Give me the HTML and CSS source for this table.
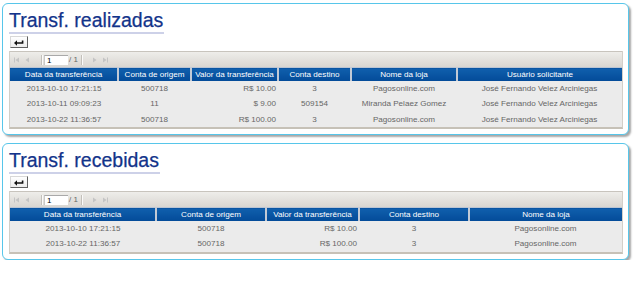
FILE: index.html
```html
<!DOCTYPE html>
<html lang="pt">
<head>
<meta charset="utf-8">
<title>Transferências</title>
<link rel="stylesheet" href="styles.css">
</head>
<body>
<div class="page">
  <section class="panel">
    <h1 class="title">Transf. realizadas</h1>
    <button class="back" type="button"><svg width="10" height="7" viewBox="0 0 10 7"><path d="M0 4 L3 1.3 L3 3.2 L7.8 3.2 L7.8 1.5 L9.4 1.5 L9.4 4.8 L3 4.8 L3 6.7 Z" fill="#111"/></svg></button>
    <div class="grid">
      <div class="pager">
        <svg class="pg" width="6" height="6" viewBox="0 0 6 6"><rect x="0" y="0.5" width="1" height="5" fill="#c4c4c4"/><path d="M5 0.5 L1.5 3 L5 5.5Z" fill="#c4c4c4"/></svg>
        <svg class="pg" width="5" height="6" viewBox="0 0 5 6"><path d="M4 0.5 L0.5 3 L4 5.5Z" fill="#c4c4c4"/></svg>
        <span class="sep"></span>
        <span class="pinput">1</span>
        <span class="ptotal">/ 1</span>
        <span class="sep"></span>
        <svg class="pg" width="5" height="6" viewBox="0 0 5 6"><path d="M1 0.5 L4.5 3 L1 5.5Z" fill="#c4c4c4"/></svg>
        <svg class="pg" width="6" height="6" viewBox="0 0 6 6"><path d="M1 0.5 L4.5 3 L1 5.5Z" fill="#c4c4c4"/><rect x="5" y="0.5" width="1" height="5" fill="#c4c4c4"/></svg>
      </div>
      <table class="tbl">
        <colgroup>
          <col class="a1"><col class="a2"><col class="a3"><col class="a4"><col class="a5"><col class="a6">
        </colgroup>
        <thead>
          <tr><th>Data da transferência</th><th>Conta de origem</th><th>Valor da transferência</th><th>Conta destino</th><th>Nome da loja</th><th>Usuário solicitante</th></tr>
        </thead>
        <tbody>
          <tr><td>2013-10-10 17:21:15</td><td>500718</td><td class="num">R$ 10.00</td><td>3</td><td>Pagosonline.com</td><td>José Fernando Velez Arciniegas</td></tr>
          <tr><td>2013-10-11 09:09:23</td><td>11</td><td class="num">$ 9.00</td><td>509154</td><td>Miranda Pelaez Gomez</td><td>José Fernando Velez Arciniegas</td></tr>
          <tr><td>2013-10-22 11:36:57</td><td>500718</td><td class="num">R$ 100.00</td><td>3</td><td>Pagosonline.com</td><td>José Fernando Velez Arciniegas</td></tr>
        </tbody>
      </table>
    </div>
  </section>

  <section class="panel">
    <h1 class="title">Transf. recebidas</h1>
    <button class="back" type="button"><svg width="10" height="7" viewBox="0 0 10 7"><path d="M0 4 L3 1.3 L3 3.2 L7.8 3.2 L7.8 1.5 L9.4 1.5 L9.4 4.8 L3 4.8 L3 6.7 Z" fill="#111"/></svg></button>
    <div class="grid">
      <div class="pager">
        <svg class="pg" width="6" height="6" viewBox="0 0 6 6"><rect x="0" y="0.5" width="1" height="5" fill="#c4c4c4"/><path d="M5 0.5 L1.5 3 L5 5.5Z" fill="#c4c4c4"/></svg>
        <svg class="pg" width="5" height="6" viewBox="0 0 5 6"><path d="M4 0.5 L0.5 3 L4 5.5Z" fill="#c4c4c4"/></svg>
        <span class="sep"></span>
        <span class="pinput">1</span>
        <span class="ptotal">/ 1</span>
        <span class="sep"></span>
        <svg class="pg" width="5" height="6" viewBox="0 0 5 6"><path d="M1 0.5 L4.5 3 L1 5.5Z" fill="#c4c4c4"/></svg>
        <svg class="pg" width="6" height="6" viewBox="0 0 6 6"><path d="M1 0.5 L4.5 3 L1 5.5Z" fill="#c4c4c4"/><rect x="5" y="0.5" width="1" height="5" fill="#c4c4c4"/></svg>
      </div>
      <table class="tbl">
        <colgroup>
          <col class="b1"><col class="b2"><col class="b3"><col class="b4"><col class="b5">
        </colgroup>
        <thead>
          <tr><th>Data da transferência</th><th>Conta de origem</th><th>Valor da transferência</th><th>Conta destino</th><th>Nome da loja</th></tr>
        </thead>
        <tbody>
          <tr><td>2013-10-10 17:21:15</td><td>500718</td><td class="num">R$ 10.00</td><td>3</td><td>Pagosonline.com</td></tr>
          <tr><td>2013-10-22 11:36:57</td><td>500718</td><td class="num">R$ 100.00</td><td>3</td><td>Pagosonline.com</td></tr>
        </tbody>
      </table>
    </div>
  </section>
</div>
</body>
</html>
```

FILE: styles.css
```css
* { box-sizing: border-box; }
html, body { margin: 0; padding: 0; background: #ffffff; }
body { font-family: "Liberation Sans", Arial, sans-serif; }

.page {
  display: flex;
  flex-direction: column;
  gap: 8px;
  padding: 3px 0 0 2px;
  width: 629px;
}

.panel {
  display: flex;
  flex-direction: column;
  align-items: flex-start;
  border: 1px solid #57c6ea;
  border-radius: 6px;
  box-shadow: 2px 2px 2px rgba(0, 0, 0, 0.35);
  padding: 5px 5px 5px 6px;
  background: #fff;
}

.title {
  margin: 0;
  font-weight: normal;
  font-size: 19.5px;
  line-height: 22px;
  color: #12338a;
  padding: 0 1px 1px 0;
  border-bottom: 2px solid #cdd1e8;
  -webkit-text-stroke: 0.25px #12338a;
}

.back {
  margin: 2px 0 0 1px;
  width: 18px;
  height: 12px;
  padding: 0;
  display: flex;
  align-items: center;
  justify-content: center;
  background: linear-gradient(#ffffff, #ececec);
  border: 1px solid #d8d8d8;
  border-right-color: #606060;
  border-bottom-color: #606060;
  border-radius: 0;
}

.grid {
  margin-top: 3px;
  align-self: stretch;
  border-left: 1px solid #d3cfc8;
  border-right: 1px solid #d3cfc8;
  border-bottom: 2px solid #c6c1b7;
}

.pager {
  height: 16px;
  display: flex;
  align-items: center;
  padding-left: 4px;
  border-top: 1px solid #c8c4bd;
  background: linear-gradient(#eeedea, #d9d6d1);
  font-size: 8px;
  color: #555;
}
.pg { margin-right: 3px; display: block; }
.pg + .pg { margin-left: 2px; }
.sep {
  width: 2px;
  height: 10px;
  border-left: 1px solid #c3c0ba;
  border-right: 1px solid #fafafa;
  margin: 0 1px 0 8px;
}
.pinput {
  width: 24px;
  height: 10px;
  background: #fff;
  border-top: 1px solid #a9a9a9;
  border-left: 1px solid #c9c9c9;
  font-size: 8px;
  line-height: 9px;
  padding-left: 2px;
  color: #000;
}
.ptotal { margin-left: 1px; color: #666; }
.pager .ptotal + .sep { margin-left: 3px; }
.pager .sep + svg { margin-left: 8px; }

.tbl {
  width: 100%;
  border-collapse: collapse;
  table-layout: fixed;
  font-size: 8.1px;
}
.a1 { width: 108px; } .a2 { width: 73px; } .a3 { width: 87px; }
.a4 { width: 73px; } .a5 { width: 106px; } .a6 { width: auto; }
.b1 { width: 146px; } .b2 { width: 110px; } .b3 { width: 93px; }
.b4 { width: 110px; } .b5 { width: auto; }

.tbl th {
  height: 13px;
  padding: 0 2px;
  font-weight: normal;
  color: #fff;
  background: linear-gradient(#1060ad, #034a98);
  text-align: center;
  white-space: nowrap;
  overflow: hidden;
  border-top: 1px solid #b9c4d4;
}
.tbl th + th { border-left: 2px solid #c2cad6; }

.tbl td {
  height: 15.5px;
  padding: 0 2px;
  background: #ebebeb;
  color: #666;
  text-align: center;
  white-space: nowrap;
  overflow: hidden;
}
.tbl td.num { text-align: right; }
```
